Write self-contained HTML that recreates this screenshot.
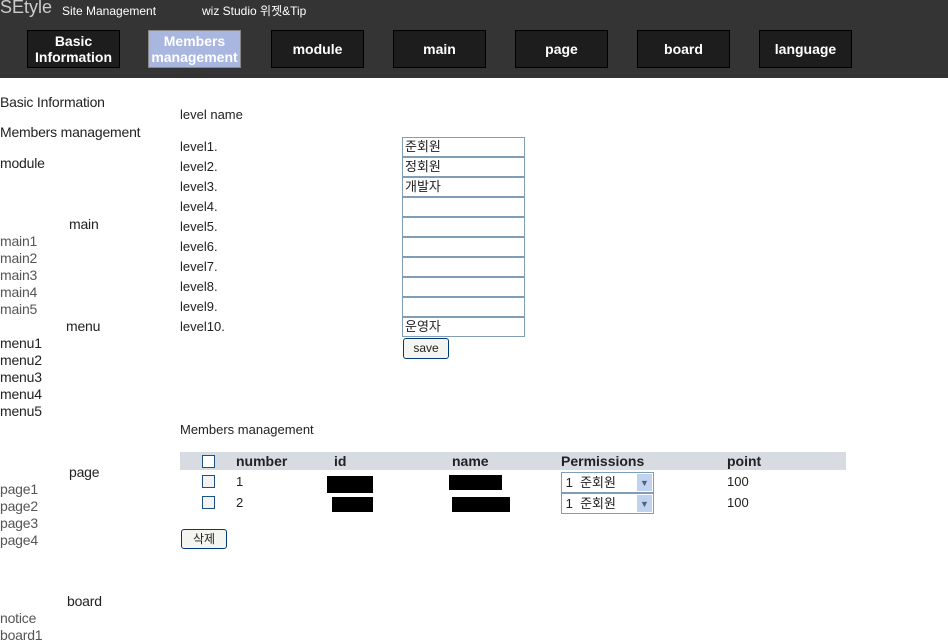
<!DOCTYPE html><html><head><meta charset="utf-8"><style>
body{margin:0;width:948px;height:642px;overflow:hidden;background:#fff;font-family:"Liberation Sans","Noto Sans CJK KR",sans-serif;color:#222;position:relative}
.a{position:absolute;white-space:nowrap}
#hd{position:absolute;left:0;top:0;width:948px;height:78px;background:#343434}
.b{position:absolute;top:30px;width:91px;height:36px;background:#1d1d1d;border:1px solid #000;color:#fff;font-weight:bold;font-size:14px;display:flex;align-items:center;justify-content:center;text-align:center;line-height:16px}
.in{position:absolute;left:402px;width:119px;height:18px;border:1px solid #7f9db9;font-size:13px;line-height:18px;padding-left:2px;box-sizing:content-box}
.s{font-size:14px;letter-spacing:-0.2px}
.g{color:#555}
.cb{position:absolute;width:11px;height:11px;border:1px solid #1c5180;background:#f3f3f3}
.sel{position:absolute;left:561px;width:91px;height:19px;border:1px solid #7f9db9;font-size:13px;line-height:19px}
.sel i{position:absolute;right:1px;top:1px;width:15px;height:17px;background:#c1d2ee;font-style:normal;font-size:9px;text-align:center;color:#4d6185}
.red{position:absolute;background:#000}
.btn{position:absolute;border:1px solid #003c74;border-radius:3px;background:#f4f4f0;font-size:12px;text-align:center}
</style></head><body>
<div id="hd"></div>
<div class="a" style="left:0;top:-3px;color:#ccc;font-size:18px">SEtyle</div>
<div class="a" style="left:62px;top:4px;color:#fff;font-size:12px">Site Management</div>
<div class="a" style="left:202px;top:2px;color:#fff;font-size:12px">wiz Studio 위젯&amp;Tip</div>
<div class="b" style="left:27px">Basic<br>Information</div>
<div class="b" style="left:148px;background:#a9b6e0;color:#fff;border-color:#888">Members<br>management</div>
<div class="b" style="left:271px">module</div>
<div class="b" style="left:393px">main</div>
<div class="b" style="left:515px">page</div>
<div class="b" style="left:637px">board</div>
<div class="b" style="left:759px">language</div>

<div class="a s" style="left:0;top:94px">Basic Information</div>
<div class="a s" style="left:0;top:124px">Members management</div>
<div class="a s" style="left:0;top:155px">module</div>
<div class="a s" style="left:69px;top:216px">main</div>
<div class="a s g" style="left:0;top:233px;line-height:17px">main1<br>main2<br>main3<br>main4<br>main5</div>
<div class="a s" style="left:66px;top:318px">menu</div>
<div class="a s" style="left:0;top:335px;line-height:17px">menu1<br>menu2<br>menu3<br>menu4<br>menu5</div>
<div class="a s" style="left:69px;top:464px">page</div>
<div class="a s g" style="left:0;top:481px;line-height:17px">page1<br>page2<br>page3<br>page4</div>
<div class="a s" style="left:67px;top:593px">board</div>
<div class="a s g" style="left:0;top:610px;line-height:17px">notice<br>board1</div>

<div class="a" style="left:180px;top:107px;font-size:13px">level name</div>
<div class="a" style="left:180px;top:137px;font-size:13px;line-height:20px">level1.<br>level2.<br>level3.<br>level4.<br>level5.<br>level6.<br>level7.<br>level8.<br>level9.<br>level10.</div>
<div class="in" style="top:137px">준회원</div>
<div class="in" style="top:157px">정회원</div>
<div class="in" style="top:177px">개발자</div>
<div class="in" style="top:197px"></div>
<div class="in" style="top:217px"></div>
<div class="in" style="top:237px"></div>
<div class="in" style="top:257px"></div>
<div class="in" style="top:277px"></div>
<div class="in" style="top:297px"></div>
<div class="in" style="top:317px">운영자</div>
<div class="btn" style="left:403px;top:338px;width:44px;height:19px;line-height:19px">save</div>

<div class="a" style="left:180px;top:422px;font-size:13px">Members management</div>
<div style="position:absolute;left:180px;top:452px;width:666px;height:18px;background:#d7dbe2"></div>
<div class="cb" style="left:202px;top:455px;background:#fff"></div>
<div class="a" style="left:236px;top:453px;font-size:14px;font-weight:bold">number</div>
<div class="a" style="left:334px;top:453px;font-size:14px;font-weight:bold">id</div>
<div class="a" style="left:452px;top:453px;font-size:14px;font-weight:bold">name</div>
<div class="a" style="left:561px;top:453px;font-size:14px;font-weight:bold">Permissions</div>
<div class="a" style="left:727px;top:453px;font-size:14px;font-weight:bold">point</div>
<div class="cb" style="left:202px;top:475px"></div>
<div class="cb" style="left:202px;top:496px"></div>
<div class="a" style="left:236px;top:474px;font-size:13px">1</div>
<div class="a" style="left:236px;top:495px;font-size:13px">2</div>
<div class="red" style="left:327px;top:476px;width:46px;height:17px"></div>
<div class="red" style="left:449px;top:475px;width:53px;height:15px"></div>
<div class="red" style="left:332px;top:497px;width:41px;height:15px"></div>
<div class="red" style="left:452px;top:497px;width:58px;height:15px"></div>
<div class="sel" style="top:472px">&nbsp;1 &nbsp;준회원<i>▼</i></div>
<div class="sel" style="top:493px">&nbsp;1 &nbsp;준회원<i>▼</i></div>
<div class="a" style="left:727px;top:474px;font-size:13px">100</div>
<div class="a" style="left:727px;top:495px;font-size:13px">100</div>
<div class="btn" style="left:181px;top:529px;width:44px;height:18px;line-height:18px">삭제</div>
</body></html>
